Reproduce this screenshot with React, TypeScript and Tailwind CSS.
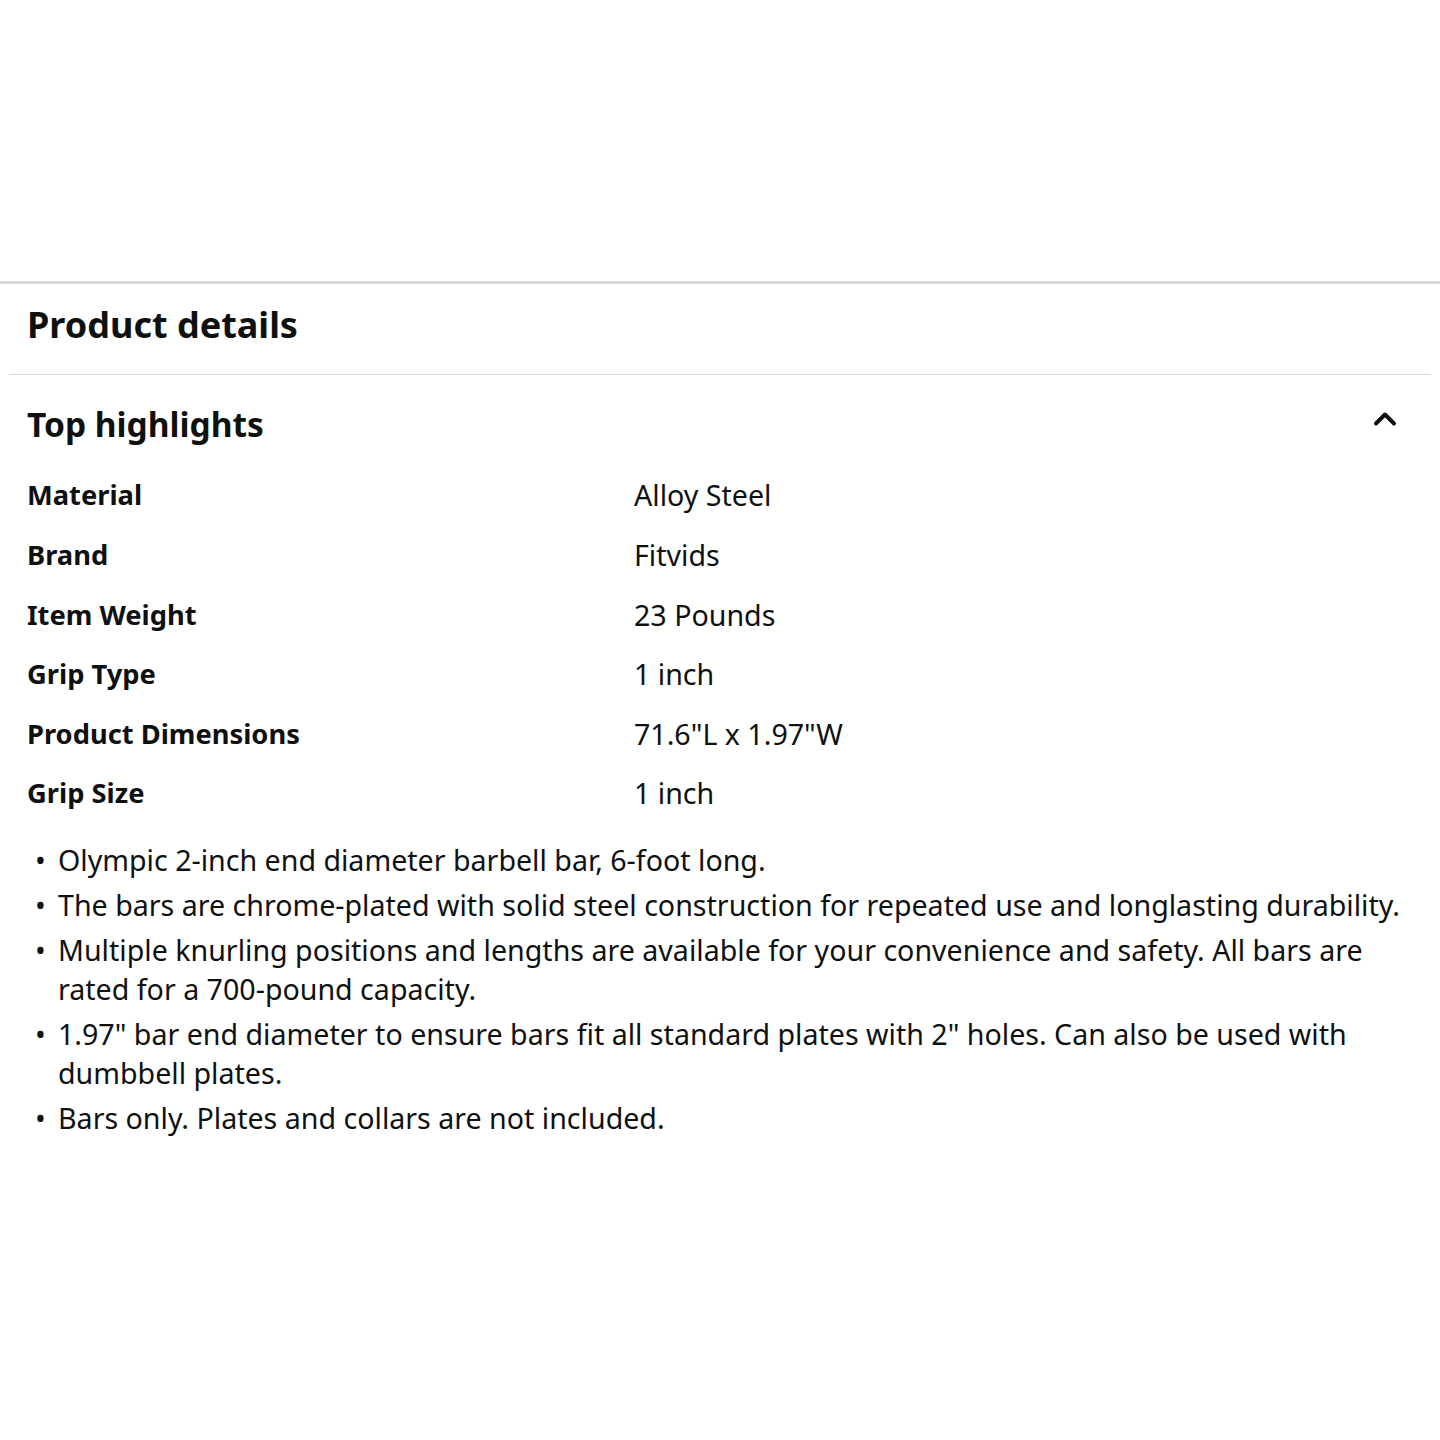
import { ChevronUp } from 'lucide-react'

const highlights: [string, string][] = [
  ['Material', 'Alloy Steel'],
  ['Brand', 'Fitvids'],
  ['Item Weight', '23 Pounds'],
  ['Grip Type', '1 inch'],
  ['Product Dimensions', '71.6"L x 1.97"W'],
  ['Grip Size', '1 inch'],
]

const bullets = [
  'Olympic 2-inch end diameter barbell bar, 6-foot long.',
  'The bars are chrome-plated with solid steel construction for repeated use and longlasting durability.',
  'Multiple knurling positions and lengths are available for your convenience and safety. All bars are rated for a 700-pound capacity.',
  '1.97" bar end diameter to ensure bars fit all standard plates with 2" holes. Can also be used with dumbbell plates.',
  'Bars only. Plates and collars are not included.',
]

export default function App() {
  return (
    <div className="min-h-[1440px] bg-white text-[#0f1111]" style={{ fontFamily: '"Noto Sans", Arial, sans-serif' }}>
      <div className="h-[281px]" />
      <div className="border-t-[3px] border-[#d5d9d9]">
        <div className="flex h-[90px] items-center px-[27px] pb-[8px]">
          <h2 className="text-[36px] font-bold leading-none">Product details</h2>
        </div>
        <div className="mx-[9px] h-px bg-[#d5d9d9]" />

        {/* Top highlights */}
        <div className="flex h-[100px] items-center justify-between pl-[27px] pr-[37px]">
          <h3 className="text-[33.5px] font-bold leading-none">Top highlights</h3>
          <ChevronUp className="-mt-[12px] h-[36px] w-[36px]" strokeWidth={2.6} />
        </div>

        <div className="-mt-[9px] px-[27px]">
          {highlights.map(([label, value]) => (
            <div key={label} className="grid h-[59.6px] grid-cols-[607px_1fr] items-center">
              <span className="text-[27.3px] font-bold">{label}</span>
              <span className="text-[28.6px]">{value}</span>
            </div>
          ))}
        </div>

        <ul className="mt-[16px] pl-[27px] pr-[20px] text-[28.6px] leading-[39px]">
          {bullets.map(b => (
            <li key={b} className="mb-[6px] flex">
              <span className="w-[31px] shrink-0 pl-[8px]">•</span>
              <span>{b}</span>
            </li>
          ))}
        </ul>
      </div>
    </div>
  )
}
